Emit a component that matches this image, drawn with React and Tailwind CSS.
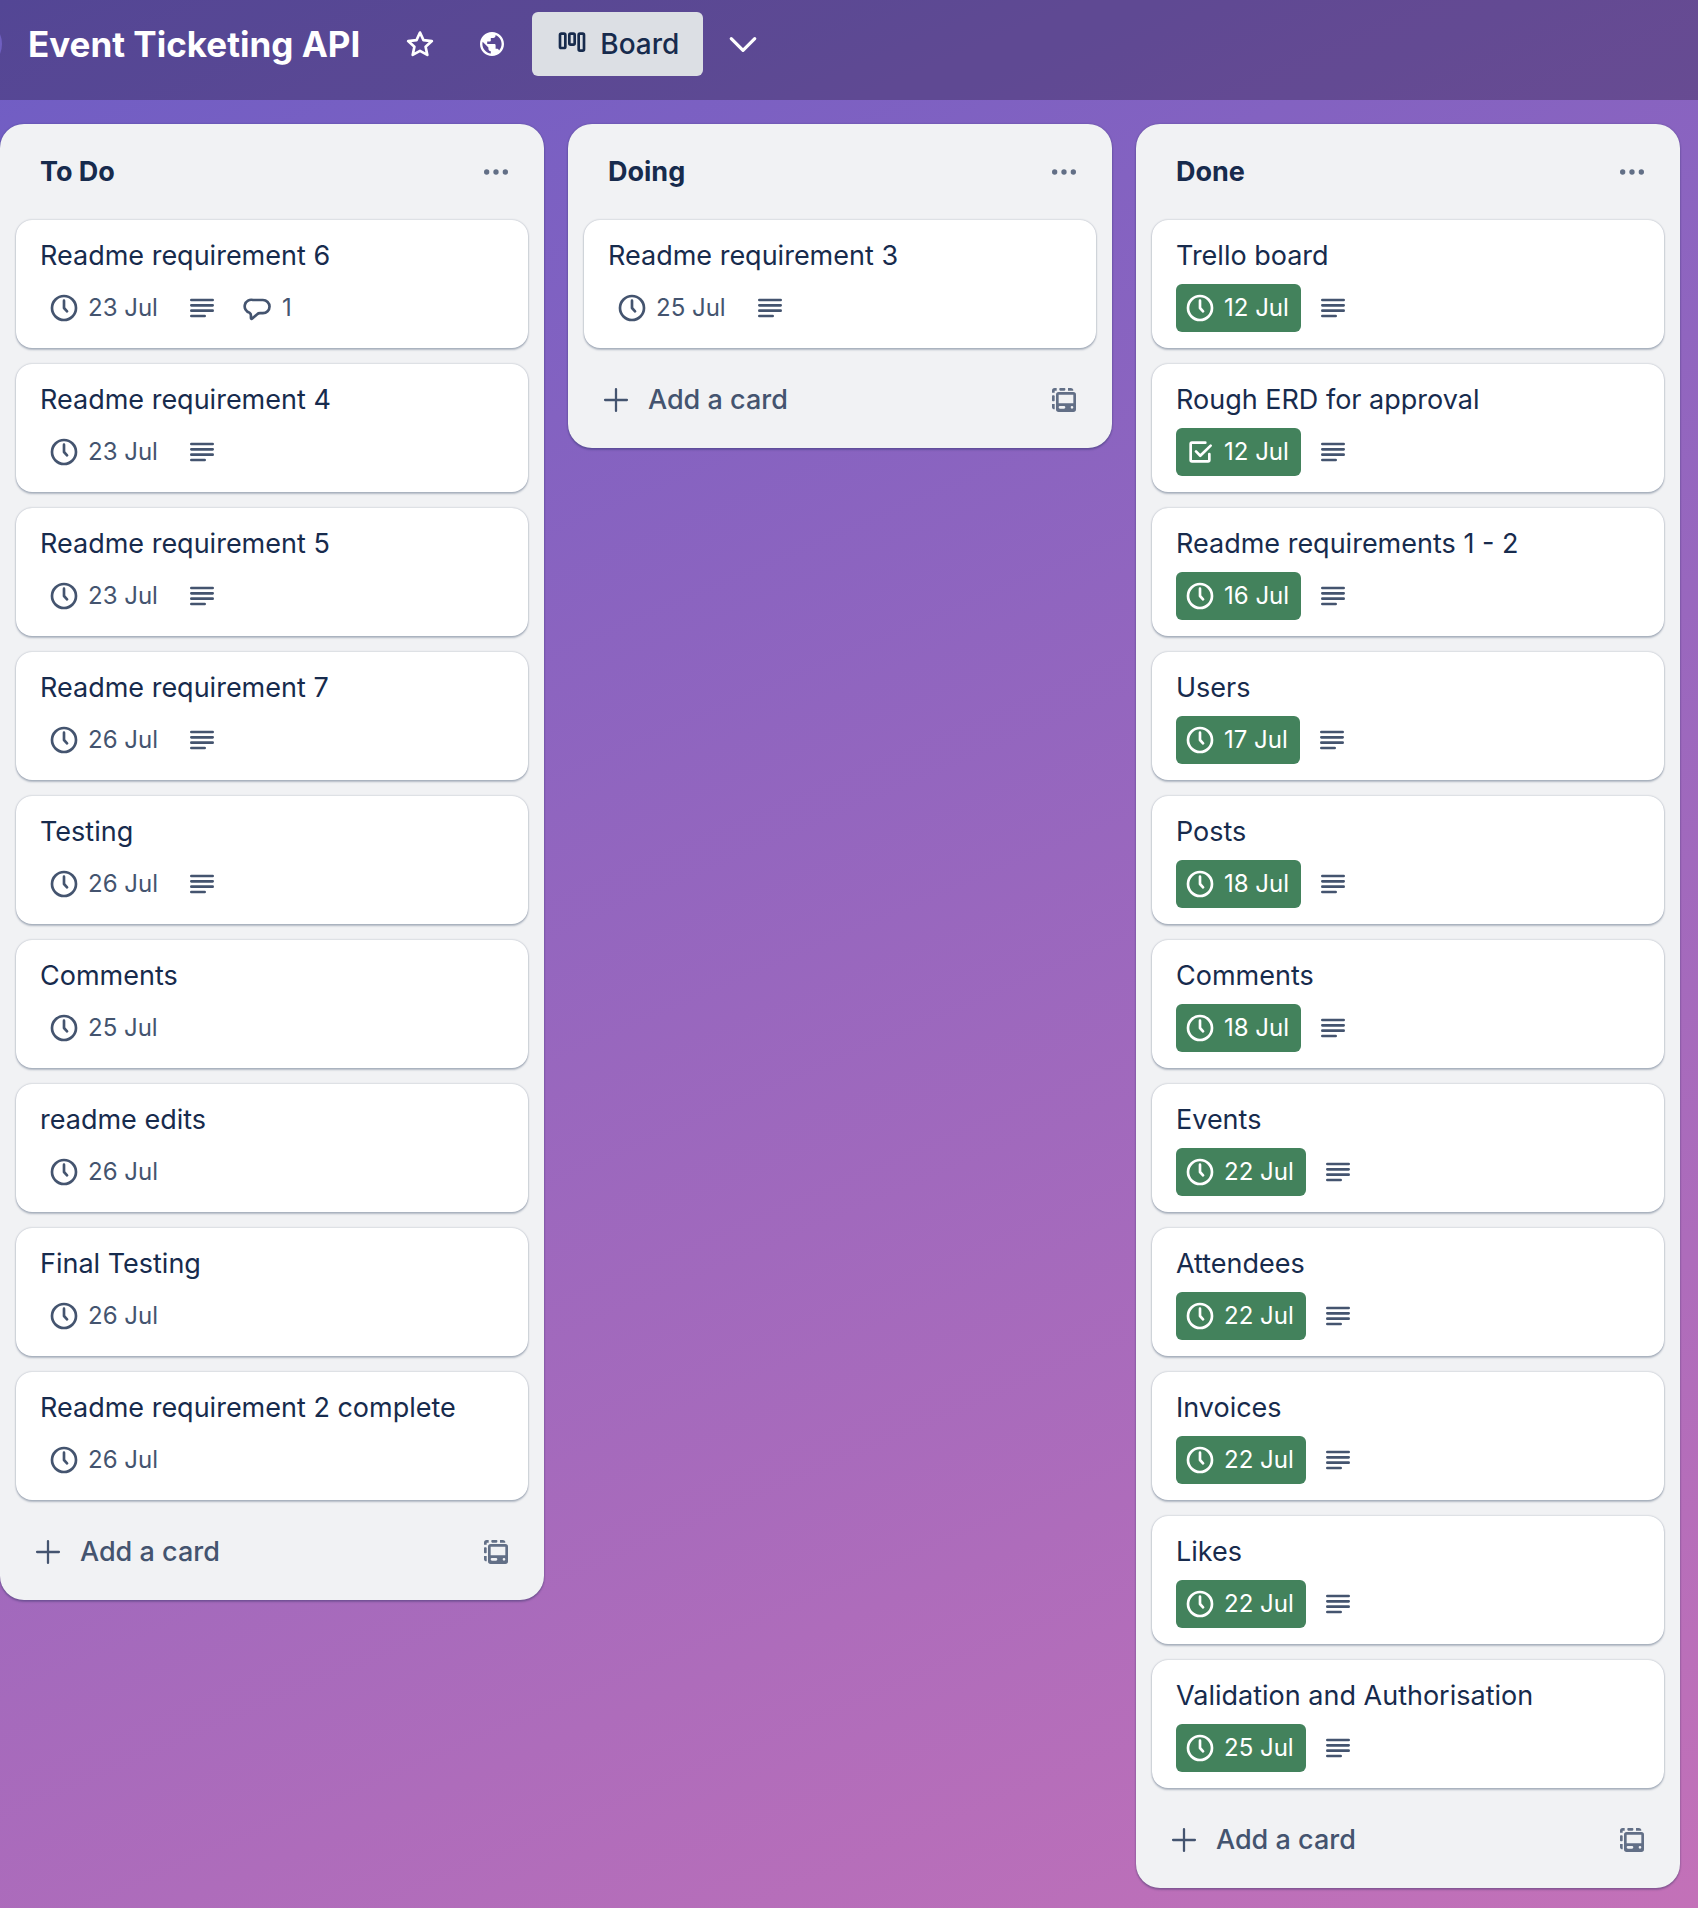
const lists = [
  {
    title: 'To Do',
    cards: [
      { title: 'Readme requirement 6', due: '23 Jul', description: true, comments: 1 },
      { title: 'Readme requirement 4', due: '23 Jul', description: true },
      { title: 'Readme requirement 5', due: '23 Jul', description: true },
      { title: 'Readme requirement 7', due: '26 Jul', description: true },
      { title: 'Testing', due: '26 Jul', description: true },
      { title: 'Comments', due: '25 Jul' },
      { title: 'readme edits', due: '26 Jul' },
      { title: 'Final Testing', due: '26 Jul' },
      { title: 'Readme requirement 2 complete', due: '26 Jul' },
    ],
  },
  {
    title: 'Doing',
    cards: [{ title: 'Readme requirement 3', due: '25 Jul', description: true }],
  },
  {
    title: 'Done',
    cards: [
      { title: 'Trello board', due: '12 Jul', done: true, description: true },
      { title: 'Rough ERD for approval', due: '12 Jul', done: true, checked: true, description: true },
      { title: 'Readme requirements 1 - 2', due: '16 Jul', done: true, description: true },
      { title: 'Users', due: '17 Jul', done: true, description: true },
      { title: 'Posts', due: '18 Jul', done: true, description: true },
      { title: 'Comments', due: '18 Jul', done: true, description: true },
      { title: 'Events', due: '22 Jul', done: true, description: true },
      { title: 'Attendees', due: '22 Jul', done: true, description: true },
      { title: 'Invoices', due: '22 Jul', done: true, description: true },
      { title: 'Likes', due: '22 Jul', done: true, description: true },
      { title: 'Validation and Authorisation', due: '25 Jul', done: true, description: true },
    ],
  },
];

function Icon({ children, className = '', strokeWidth = 2 }) {
  return (
    <svg
      viewBox="0 0 24 24"
      className={`size-8 shrink-0 ${className}`}
      fill="none"
      stroke="currentColor"
      strokeWidth={strokeWidth}
      strokeLinecap="round"
      strokeLinejoin="round"
      aria-hidden="true"
    >
      {children}
    </svg>
  );
}

function ClockIcon() {
  return (
    <Icon>
      <circle cx="12" cy="12" r="9" />
      <path d="M12 6.5V12l2.3 2.5" />
    </Icon>
  );
}

function CheckedIcon() {
  return (
    <Icon>
      <path d="M16 5H6a1 1 0 0 0-1 1v12a1 1 0 0 0 1 1h12a1 1 0 0 0 1-1v-4.500" />
      <path d="M9 11.500l3.200 3.300L20 7.200" />
    </Icon>
  );
}

function DescriptionIcon() {
  return (
    <Icon>
      <path d="M4 6h16M4 10h16M4 14h16M4 18h10" />
    </Icon>
  );
}

function CommentIcon() {
  return (
    <Icon>
      <path d="M8.300 6h7.400a4.900 4.900 0 0 1 0 9.900H13.500c-.9 0-1.500.2-2.100.8l-3.700 3.200c-.5.4-1 .1-1-.4v-2.100c0-.8-.3-1.300-1-1.800A4.900 4.900 0 0 1 8.300 6z" />
    </Icon>
  );
}

function TemplateIcon() {
  return (
    <Icon>
      <g fill="currentColor" stroke="none">
        <path
          fillRule="evenodd"
          d="M8 6h11a2 2 0 0 1 2 2v11a2 2 0 0 1-2 2H8a2 2 0 0 1-2-2V8a2 2 0 0 1 2-2zM8 8v6.500h11V8zM9 16.500a1 1 0 0 0 0 2h3a1 1 0 0 0 0-2zM18 16.500a1 1 0 0 0 0 2a1 1 0 0 0 0-2z"
        />
        <path d="M5 3h1.500v2H5v1.500H3V5a2 2 0 0 1 2-2z" />
        <rect x="8.500" y="3" width="4.500" height="2" rx=".6" />
        <path d="M15 3h2a2 2 0 0 1 2 2h-4z" />
        <rect x="3" y="8.500" width="2" height="4.500" rx=".6" />
        <path d="M3 15h2v4a2 2 0 0 1-2-2z" />
      </g>
    </Icon>
  );
}

function Badge({ children, solid }) {
  return (
    <span
      className={`flex h-12 items-center rounded-md pl-2 ${
        solid ? 'bg-[#43825c] text-white' : 'text-[#44546f]'
      }`}
    >
      {children}
    </span>
  );
}

function Card({ card }) {
  return (
    <li className="rounded-2xl bg-white px-6 py-4 shadow-[0_2px_2px_#091e4240,0_0_2px_#091e424f]">
      <a href="#card" className="block text-[27px] leading-10 text-[#172b4d]">
        {card.title}
      </a>
      <div className="mt-2 flex gap-2 text-2xl">
        <Badge solid={card.done}>
          {card.checked ? <CheckedIcon /> : <ClockIcon />}
          <span className="pr-3 pl-2">{card.due}</span>
        </Badge>
        {card.description && (
          <Badge>
            <DescriptionIcon />
            <span className="w-2" />
          </Badge>
        )}
        {card.comments && (
          <Badge>
            <CommentIcon />
            <span className="pr-3 pl-2">{card.comments}</span>
          </Badge>
        )}
      </div>
    </li>
  );
}

function List({ list }) {
  return (
    <section className="min-w-0 flex-1 rounded-3xl bg-[#f1f2f4] px-4 shadow-[0_2px_2px_#091e4240,0_0_2px_#091e424f]">
      <header className="flex h-24 items-center justify-between pr-4 pl-6">
        <h2 className="text-[27px] leading-10 font-bold text-[#172b4d]">{list.title}</h2>
        <button type="button" aria-label="List actions" className="text-[#626f86]">
          <Icon>
            <g fill="currentColor" stroke="none">
              <circle cx="5" cy="12" r="2" />
              <circle cx="12" cy="12" r="2" />
              <circle cx="19" cy="12" r="2" />
            </g>
          </Icon>
        </button>
      </header>
      <ol className="flex flex-col gap-4">
        {list.cards.map((card) => (
          <Card key={card.title} card={card} />
        ))}
      </ol>
      <footer className="flex h-[100px] items-center justify-between px-4 pt-1">
        <button
          type="button"
          className="flex items-center gap-4 text-[27px] leading-10 font-medium text-[#44546f]"
        >
          <Icon strokeWidth={1.7}>
            <path d="M12 3.800v16.400M3.800 12h16.400" />
          </Icon>
          Add a card
        </button>
        <button type="button" aria-label="Create from template" className="text-[#626f86]">
          <TemplateIcon />
        </button>
      </footer>
    </section>
  );
}

export default function App() {
  return (
    <div className="min-h-screen overflow-hidden bg-[linear-gradient(157deg,#6e5dc4,#c371b8)] font-[Inter,'Liberation_Sans',sans-serif]">
      <header className="flex h-[100px] items-start bg-black/24 pt-3 text-white">
        <div className="flex h-16 items-center">
          <span className="-ml-[50px] size-[52px] shrink-0 rounded-full bg-[#6f5fc0]" />
          <h1 className="ml-[26px] text-[35px] font-bold whitespace-nowrap">Event Ticketing API</h1>
          <button type="button" aria-label="Star board" className="ml-11">
            <Icon>
              <path d="M12 3.400l2.600 5.700 6.300.7-4.700 4.200 1.300 6.200-5.500-3.100-5.500 3.100 1.300-6.200L3.100 9.800l6.300-.7z" />
            </Icon>
          </button>
          <button type="button" aria-label="Visibility" className="ml-10">
            <Icon>
              <g transform="translate(1.200 1.200) scale(.9)" fill="currentColor" stroke="none">
                <path d="M12 2C6.480 2 2 6.480 2 12s4.480 10 10 10 10-4.480 10-10S17.520 2 12 2zm-1 17.930c-3.950-.49-7-3.850-7-7.930 0-.62.08-1.210.21-1.790L9 15v1c0 1.100.9 2 2 2v1.930zm6.900-2.540c-.26-.81-1-1.390-1.900-1.390h-1v-3c0-.55-.45-1-1-1H8v-2h2c.55 0 1-.45 1-1V7h2c1.100 0 2-.9 2-2v-.41c2.930 1.190 5 4.060 5 7.410 0 2.080-.8 3.970-2.100 5.390z" />
              </g>
            </Icon>
          </button>
          <button
            type="button"
            className="ml-6 flex h-16 items-center gap-3 rounded-md bg-[#dcdfe4] px-6 text-[28px] font-medium text-[#172b4d]"
          >
            <Icon strokeWidth={2}>
              <rect x="3" y="4.250" width="4" height="10.750" rx="1" />
              <rect x="10" y="4.250" width="4" height="8.250" rx="1" />
              <rect x="17" y="4.250" width="4" height="12.750" rx="1" />
            </Icon>
            Board
          </button>
          <button type="button" aria-label="Views" className="ml-6">
            <Icon strokeWidth={2.4}>
              <path d="M3.200 8l8.800 8.800L20.800 8" />
            </Icon>
          </button>
        </div>
      </header>
      <main className="flex items-start gap-6 pt-6 pr-[18px]">
        {lists.map((list) => (
          <List key={list.title} list={list} />
        ))}
      </main>
    </div>
  );
}
